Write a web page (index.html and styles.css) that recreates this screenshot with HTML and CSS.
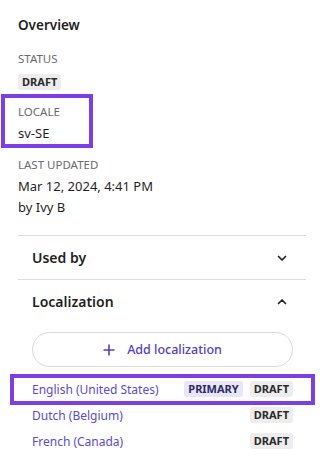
FILE: index.html
```html
<!DOCTYPE html>
<html lang="en">
<head>
<meta charset="utf-8">
<title>Overview</title>
<link rel="stylesheet" href="styles.css">
</head>
<body>
<div class="panel">
  <h2 class="title">Overview</h2>

  <div class="field">
    <div class="label">STATUS</div>
    <div class="value"><span class="badge">DRAFT</span></div>
  </div>

  <div class="field field-hl">
    <div class="label">LOCALE</div>
    <div class="value">sv-SE</div>
  </div>

  <div class="field">
    <div class="label">LAST UPDATED</div>
    <div class="value">Mar 12, 2024, 4:41 PM</div>
    <div class="value">by Ivy B</div>
  </div>

  <div class="section">
    <div class="section-head">
      <span class="section-title">Used by</span>
      <svg class="chev" viewBox="0 0 16 16" width="16" height="16"><path d="M4.5 6.5 L8 10 L11.5 6.5" fill="none" stroke="#222" stroke-width="1.7" stroke-linecap="round" stroke-linejoin="round"/></svg>
    </div>
  </div>

  <div class="section">
    <div class="section-head">
      <span class="section-title">Localization</span>
      <svg class="chev" viewBox="0 0 16 16" width="16" height="16"><path d="M4.5 9.5 L8 6 L11.5 9.5" fill="none" stroke="#222" stroke-width="1.7" stroke-linecap="round" stroke-linejoin="round"/></svg>
    </div>
    <div class="section-body">
      <button class="add-btn" type="button">
        <svg viewBox="0 0 12 12" width="12" height="12"><path d="M6 0.5 V11.5 M0.5 6 H11.5" stroke="#5140c4" stroke-width="1.6" fill="none"/></svg>
        <span>Add localization</span>
      </button>
      <ul class="loc-list">
        <li class="loc-row loc-hl">
          <a class="loc-link" href="#">English (United States)</a>
          <span class="badges"><span class="badge badge-primary">PRIMARY</span><span class="badge">DRAFT</span></span>
        </li>
        <li class="loc-row">
          <a class="loc-link" href="#">Dutch (Belgium)</a>
          <span class="badges"><span class="badge">DRAFT</span></span>
        </li>
        <li class="loc-row">
          <a class="loc-link" href="#">French (Canada)</a>
          <span class="badges"><span class="badge">DRAFT</span></span>
        </li>
      </ul>
    </div>
  </div>
</div>
</body>
</html>
```

FILE: styles.css
```css
html, body {
  margin: 0;
  padding: 0;
  background: #ffffff;
}

body {
  font-family: "Noto Sans", "Open Sans", sans-serif;
  color: #1f1f1f;
  font-size: 13px;
}

.panel {
  width: 288px;
  padding: 15px 18px 0 18px;
}

.title {
  margin: 0 0 15px 0;
  font-size: 13.5px;
  font-weight: 600;
  line-height: 20px;
  color: #1f1f1f;
}

.field {
  position: relative;
  margin-bottom: 12px;
}

.field-hl::after {
  content: "";
  position: absolute;
  left: -17px;
  top: -9px;
  width: 84px;
  bottom: -4px;
  border: 4px solid #7b3fe4;
}

.label {
  font-size: 11.5px;
  line-height: 18px;
  color: #6b6b6b;
  margin-bottom: 2px;
}

.value {
  font-size: 13px;
  line-height: 21px;
  color: #1f1f1f;
}

.badge {
  display: inline-block;
  vertical-align: middle;
  font-size: 11px;
  font-weight: 700;
  line-height: 16px;
  padding: 0 4px;
  border-radius: 3px;
  background: #ededed;
  color: #2a2a2a;
}

.badge-primary {
  background: #e8e6fb;
  color: #2e2a5e;
}

.section {
  border-top: 1px solid #dddddd;
}

.field + .section {
  margin-top: 17px;
}

.section-head {
  height: 43px;
  display: flex;
  align-items: center;
  justify-content: space-between;
  padding: 0 16px 0 14px;
}

.section-title {
  font-size: 14px;
  font-weight: 600;
  color: #1f1f1f;
}

.chev {
  display: block;
}

.section-body {
  padding: 9px 13px 0 14px;
}

.add-btn {
  width: 100%;
  height: 35px;
  border: 1px solid #d9d9d9;
  border-radius: 18px;
  background: #ffffff;
  display: flex;
  align-items: center;
  justify-content: center;
  gap: 12px;
  font-family: inherit;
  font-size: 12.5px;
  font-weight: 500;
  color: #5140c4;
  padding: 0;
}

.add-btn svg {
  display: block;
}

.loc-list {
  list-style: none;
  margin: 9px 0 0 0;
  padding: 0;
}

.loc-row {
  position: relative;
  height: 26px;
  display: flex;
  align-items: center;
  justify-content: space-between;
}

.loc-hl::after {
  content: "";
  position: absolute;
  left: -22px;
  right: -22px;
  top: -2px;
  bottom: -3px;
  border: 4px solid #7b3fe4;
}

.loc-link {
  color: #5a4bd3;
  text-decoration: none;
  font-size: 12px;
}

.badges {
  display: flex;
  gap: 7px;
}
```
